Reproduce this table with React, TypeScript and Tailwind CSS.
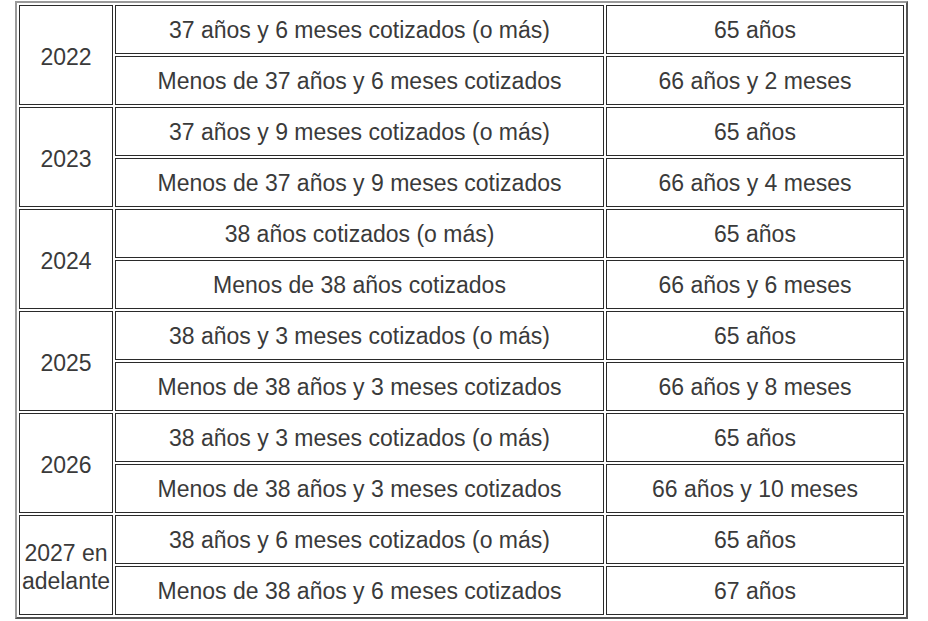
const groups = [
  {
    year: "2022",
    rows: [
      ["37 años y 6 meses cotizados (o más)", "65 años"],
      ["Menos de 37 años y 6 meses cotizados", "66 años y 2 meses"],
    ],
  },
  {
    year: "2023",
    rows: [
      ["37 años y 9 meses cotizados (o más)", "65 años"],
      ["Menos de 37 años y 9 meses cotizados", "66 años y 4 meses"],
    ],
  },
  {
    year: "2024",
    rows: [
      ["38 años cotizados (o más)", "65 años"],
      ["Menos de 38 años cotizados", "66 años y 6 meses"],
    ],
  },
  {
    year: "2025",
    rows: [
      ["38 años y 3 meses cotizados (o más)", "65 años"],
      ["Menos de 38 años y 3 meses cotizados", "66 años y 8 meses"],
    ],
  },
  {
    year: "2026",
    rows: [
      ["38 años y 3 meses cotizados (o más)", "65 años"],
      ["Menos de 38 años y 3 meses cotizados", "66 años y 10 meses"],
    ],
  },
  {
    year: "2027 en adelante",
    rows: [
      ["38 años y 6 meses cotizados (o más)", "65 años"],
      ["Menos de 38 años y 6 meses cotizados", "67 años"],
    ],
  },
];

export default function App() {
  return (
    <div className="h-[621px] w-[928px] bg-white pl-[15px] pt-[1px] font-['Liberation_Sans',Arial,sans-serif] text-[23px] text-[#3a3a3a]">
      <table className="table-fixed border-separate border-spacing-[2px] border-2 border-t-[#9a9a9a] border-l-[#9a9a9a] border-r-[#555555] border-b-[#555555]">
        <colgroup>
          <col className="w-[94px]" />
          <col className="w-[489px]" />
          <col className="w-[298px]" />
        </colgroup>
        <tbody>
          {groups.map((group) =>
            group.rows.map((row, i) => (
              <tr key={`${group.year}-${i}`}>
                {i === 0 && (
                  <td
                    rowSpan={2}
                    className="border border-[#2a2a2a] p-0 pt-[3px] text-center align-middle leading-[28px]"
                  >
                    {group.year}
                  </td>
                )}
                <td className="h-[49px] border border-[#2a2a2a] p-0 text-center align-middle leading-[26px]">
                  {row[0]}
                </td>
                <td className="h-[49px] border border-[#2a2a2a] p-0 text-center align-middle leading-[26px]">
                  {row[1]}
                </td>
              </tr>
            ))
          )}
        </tbody>
      </table>
    </div>
  );
}
